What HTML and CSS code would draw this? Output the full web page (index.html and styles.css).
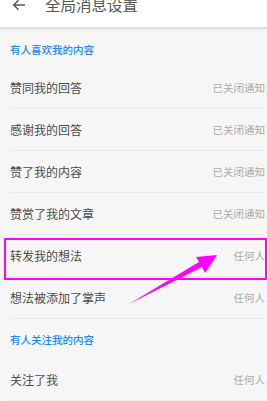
FILE: index.html
```html
<!DOCTYPE html>
<html lang="zh">
<head>
<meta charset="utf-8">
<link rel="stylesheet" href="styles.css">
</head>
<body>
<div class="page">
  <header class="topbar">
    <svg class="back" width="14" height="12" viewBox="0 0 14 12"><path d="M13 6H2M6.5 1.2L1.7 6l4.8 4.8" fill="none" stroke="#555" stroke-width="1.4"/></svg>
    <span class="title">全局消息设置</span>
  </header>
  <div class="shadow"></div>
  <section>
    <div class="label">有人喜欢我的内容</div>
    <div class="row"><span class="name">赞同我的回答</span><span class="val">已关闭通知</span></div>
    <div class="row"><span class="name">感谢我的回答</span><span class="val">已关闭通知</span></div>
    <div class="row"><span class="name">赞了我的内容</span><span class="val">已关闭通知</span></div>
    <div class="row"><span class="name">赞赏了我的文章</span><span class="val">已关闭通知</span></div>
    <div class="row"><span class="name">转发我的想法</span><span class="val">任何人</span></div>
    <div class="row"><span class="name">想法被添加了掌声</span><span class="val">任何人</span></div>
  </section>
  <section>
    <div class="label">有人关注我的内容</div>
    <div class="row"><span class="name">关注了我</span><span class="val">任何人</span></div>
  </section>
  <div class="highlight"></div>
  <svg class="arrow" width="267" height="401" viewBox="0 0 267 401"><polygon points="129,304 199,262 196,257 217,255 205,273 202,267" fill="#f0f"/></svg>
</div>
</body>
</html>
```
FILE: styles.css
```css
html, body { margin: 0; padding: 0; }
body {
  background: #f6f6f6;
  font-family: "Noto Sans CJK SC", "Noto Sans", sans-serif;
  overflow: hidden;
}
.page { position: relative; width: 267px; height: 401px; overflow: hidden; }
.topbar {
  height: 44px;
  margin-top: -17px;
  background: #fff;
  display: flex;
  align-items: center;
  padding-left: 12px;
  box-sizing: border-box;
}
.back { flex: none; }
.title {
  margin-left: 19px;
  font-size: 15.5px;
  color: #555;
  line-height: 1;
}
.shadow {
  height: 4px;
  background: linear-gradient(#d8d8d8, #f6f6f6);
}
.label {
  height: 36px;
  display: flex;
  align-items: center;
  padding-left: 10px;
  font-size: 10.5px;
  color: #1a8cf0;
  font-weight: 500;
}
section + section .label { height: 40px; }
.row {
  height: 41px;
  margin-left: 9px;
  margin-right: 2px;
  border-bottom: 1px solid #ebebeb;
  display: flex;
  align-items: center;
  justify-content: space-between;
  padding-left: 1px;
}
.name { font-size: 12px; color: #4a4a4a; }
.val { font-size: 10.5px; color: #aaa; }
.highlight {
  position: absolute;
  left: 4px;
  top: 238px;
  width: 263px;
  height: 42px;
  box-sizing: border-box;
  border: 2.5px solid #f0f;
  border-right-width: 2px;
}
.arrow { position: absolute; left: 0; top: 0; }
```
